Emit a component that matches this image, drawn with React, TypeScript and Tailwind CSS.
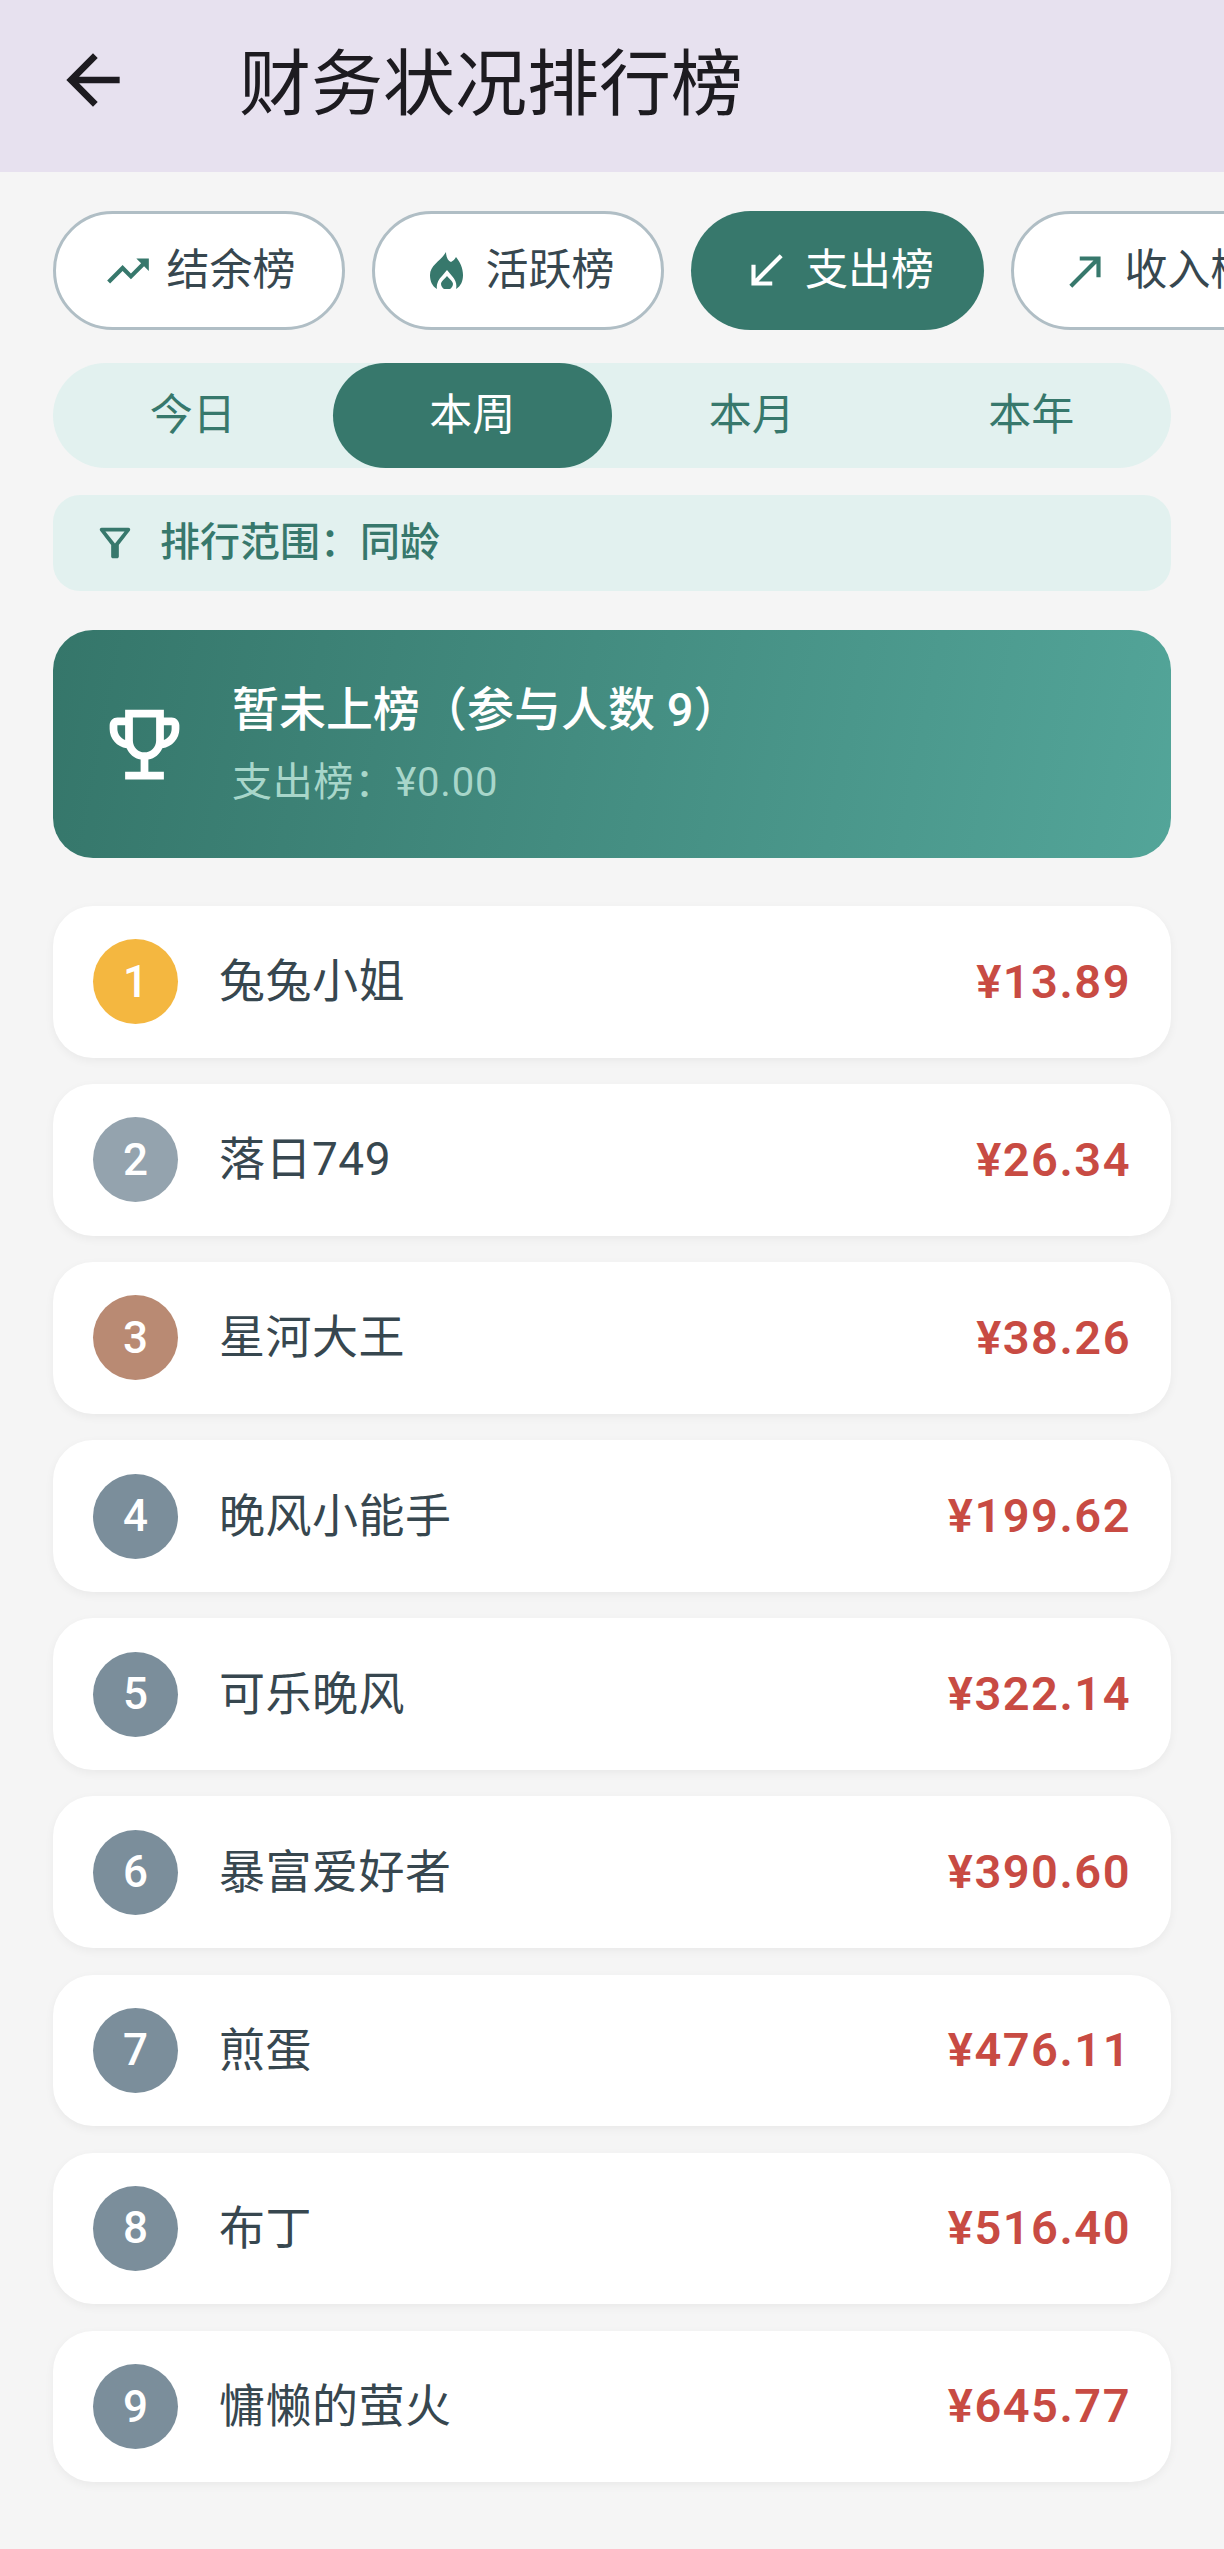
const tabs = ['今日', '本周', '本月', '本年'];

const rows = [
  { rank: 1, name: '兔兔小姐', amount: '¥13.89', color: 'bg-[#f4b740]' },
  { rank: 2, name: '落日749', amount: '¥26.34', color: 'bg-[#94a3ae]' },
  { rank: 3, name: '星河大王', amount: '¥38.26', color: 'bg-[#b98a73]' },
  { rank: 4, name: '晚风小能手', amount: '¥199.62', color: 'bg-[#7b8e9b]' },
  { rank: 5, name: '可乐晚风', amount: '¥322.14', color: 'bg-[#7b8e9b]' },
  { rank: 6, name: '暴富爱好者', amount: '¥390.60', color: 'bg-[#7b8e9b]' },
  { rank: 7, name: '煎蛋', amount: '¥476.11', color: 'bg-[#7b8e9b]' },
  { rank: 8, name: '布丁', amount: '¥516.40', color: 'bg-[#7b8e9b]' },
  { rank: 9, name: '慵懒的萤火', amount: '¥645.77', color: 'bg-[#7b8e9b]' },
];

function Icon({ d, className }: { d: string; className: string }) {
  return (
    <svg viewBox="0 0 24 24" fill="currentColor" className={className}>
      <path d={d} />
    </svg>
  );
}

function Flame() {
  return (
    <div className="w-[50px] flex justify-center">
      <svg viewBox="0 0 33 37" fill="currentColor" fillRule="evenodd" className="w-[33px] h-[37px] text-[#37786c]">
        <path d="M7 37C2 34 0 29 0 23C0 13 11 9 16 0C16 5 18 9 21 10C23 9 25 7 26 5C30 10 33 16 33 23C33 29 31 34 26 37C27 33 26 28 22 24L17 18L12 24C8 28 6 33 7 37Z" />
        <path d="M17 24C19 27 23 29 23 32A6 5.5 0 0 1 11 32C11 29 15 27 17 24Z" />
      </svg>
    </div>
  );
}

function Chip({ label, active, children }: { label: string; active?: boolean; children: React.ReactNode }) {
  return (
    <div
      className={
        active
          ? 'shrink-0 w-[293px] h-[119px] rounded-full bg-[#37786c] text-white flex items-center justify-center gap-[14px]'
          : 'shrink-0 w-[292px] h-[119px] rounded-full bg-white border-[3px] border-[#b0bec5] text-[#37474f] flex items-center justify-center gap-[14px]'
      }
    >
      {children}
      <span className="text-[43px] leading-none">{label}</span>
    </div>
  );
}

export default function App() {
  return (
    <div className="w-[1224px] h-[2549px] overflow-hidden bg-[#f5f5f5] font-['Roboto','Noto_Sans_CJK_SC',sans-serif]">
      {/* Header */}
      <div className="h-[172px] bg-[#e7e1ef] flex items-center pl-[53px] pb-[12px]">
        <Icon className="w-[80px] h-[80px] text-[#1d1b20]" d="M20 11H7.83l5.59-5.59L12 4l-8 8 8 8 1.41-1.41L7.83 13H20v-2z" />
        <h1 className="ml-[106px] mt-[9px] text-[72px] leading-none font-normal text-[#1d1b20]">财务状况排行榜</h1>
      </div>

      {/* Ranking type */}
      <div className="mt-[39px] pl-[53px] flex gap-[27px] overflow-hidden">
        <Chip label="结余榜">
          <Icon className="w-[50px] h-[50px] text-[#37786c]" d="M16 6l2.29 2.29-4.88 4.88-4-4L2 16.59 3.41 18l6-6 4 4 6.3-6.29L22 12V6z" />
        </Chip>
        <Chip label="活跃榜">
          <Flame />
        </Chip>
        <Chip label="支出榜" active>
          <Icon className="w-[50px] h-[50px]" d="M20 5.41L18.59 4 7 15.59V9H5v10h10v-2H8.41z" />
        </Chip>
        <Chip label="收入榜">
          <Icon className="w-[50px] h-[50px] text-[#37786c]" d="M9 5v2h6.59L4 18.59 5.41 20 17 8.41V15h2V5z" />
        </Chip>
      </div>

      {/* Period */}
      <div className="mt-[33px] mx-[53px] h-[105px] rounded-full bg-[#e2f1ef] flex">
        {tabs.map((t) => (
          <div
            key={t}
            className={
              t === '本周'
                ? 'flex-1 rounded-full bg-[#37786c] text-white flex items-center justify-center text-[43px]'
                : 'flex-1 rounded-full text-[#37786c] flex items-center justify-center text-[43px]'
            }
          >
            {t}
          </div>
        ))}
      </div>

      {/* Scope */}
      <div className="mt-[27px] mx-[53px] h-[96px] rounded-[27px] bg-[#e2f1ef] flex items-center pl-[39px] text-[#37786c]">
        <Icon className="w-[46px] h-[46px]" d="M7 6h10l-5.01 6.3L7 6zm-2.75-.39C6.27 8.2 10 13 10 13v6c0 .55.45 1 1 1h2c.55 0 1-.45 1-1v-6s3.72-4.8 5.74-7.39c.51-.66.04-1.61-.79-1.61H5.04c-.83 0-1.3.95-.79 1.61z" />
        <span className="ml-[22px] text-[40px] font-medium">排行范围：同龄</span>
      </div>

      {/* My rank */}
      <div className="mt-[39px] mx-[53px] h-[228px] rounded-[40px] bg-linear-[101deg] from-[#35766a] to-[#53a599] flex items-center pl-[45px] text-white">
        <Icon className="w-[93px] h-[93px]" d="M19 5h-2V3H7v2H5c-1.1 0-2 .9-2 2v1c0 2.55 1.92 4.63 4.39 4.94.63 1.5 1.98 2.63 3.61 2.96V19H7v2h10v-2h-4v-3.1c1.63-.33 2.98-1.46 3.61-2.96C19.08 12.63 21 10.55 21 8V7c0-1.1-.9-2-2-2zM5 8V7h2v3.82C5.84 10.4 5 9.3 5 8zm7 6c-1.65 0-3-1.35-3-3V5h6v6c0 1.65-1.35 3-3 3zm7-6c0 1.3-.84 2.4-2 2.82V7h2v1z" />
        <div className="ml-[41px]">
          <div className="text-[47px] leading-[64px] font-medium">暂未上榜（参与人数 9）</div>
          <div className="mt-[14px] text-[40px] leading-[54px] text-[#a8d6ca] tracking-[0.8px]">支出榜：¥0.00</div>
        </div>
      </div>

      {/* List */}
      <div className="mt-[48px] mx-[53px] flex flex-col gap-[26.5px]">
        {rows.map((r) => (
          <div
            key={r.rank}
            className="h-[151.6px] rounded-[40px] bg-white shadow-[0_3px_10px_rgba(0,0,0,0.05)] flex items-center pl-[40px] pr-[40px]"
          >
            <div className={`w-[85px] h-[85px] rounded-full ${r.color} text-white flex items-center justify-center text-[44px] font-medium`}>
              {r.rank}
            </div>
            <div className="ml-[41px] flex-1 text-[46px] text-[#37474f] tracking-[0.5px]">{r.name}</div>
            <div className="text-[47px] font-semibold text-[#c84b43] tracking-[1.5px]">{r.amount}</div>
          </div>
        ))}
      </div>
    </div>
  );
}
